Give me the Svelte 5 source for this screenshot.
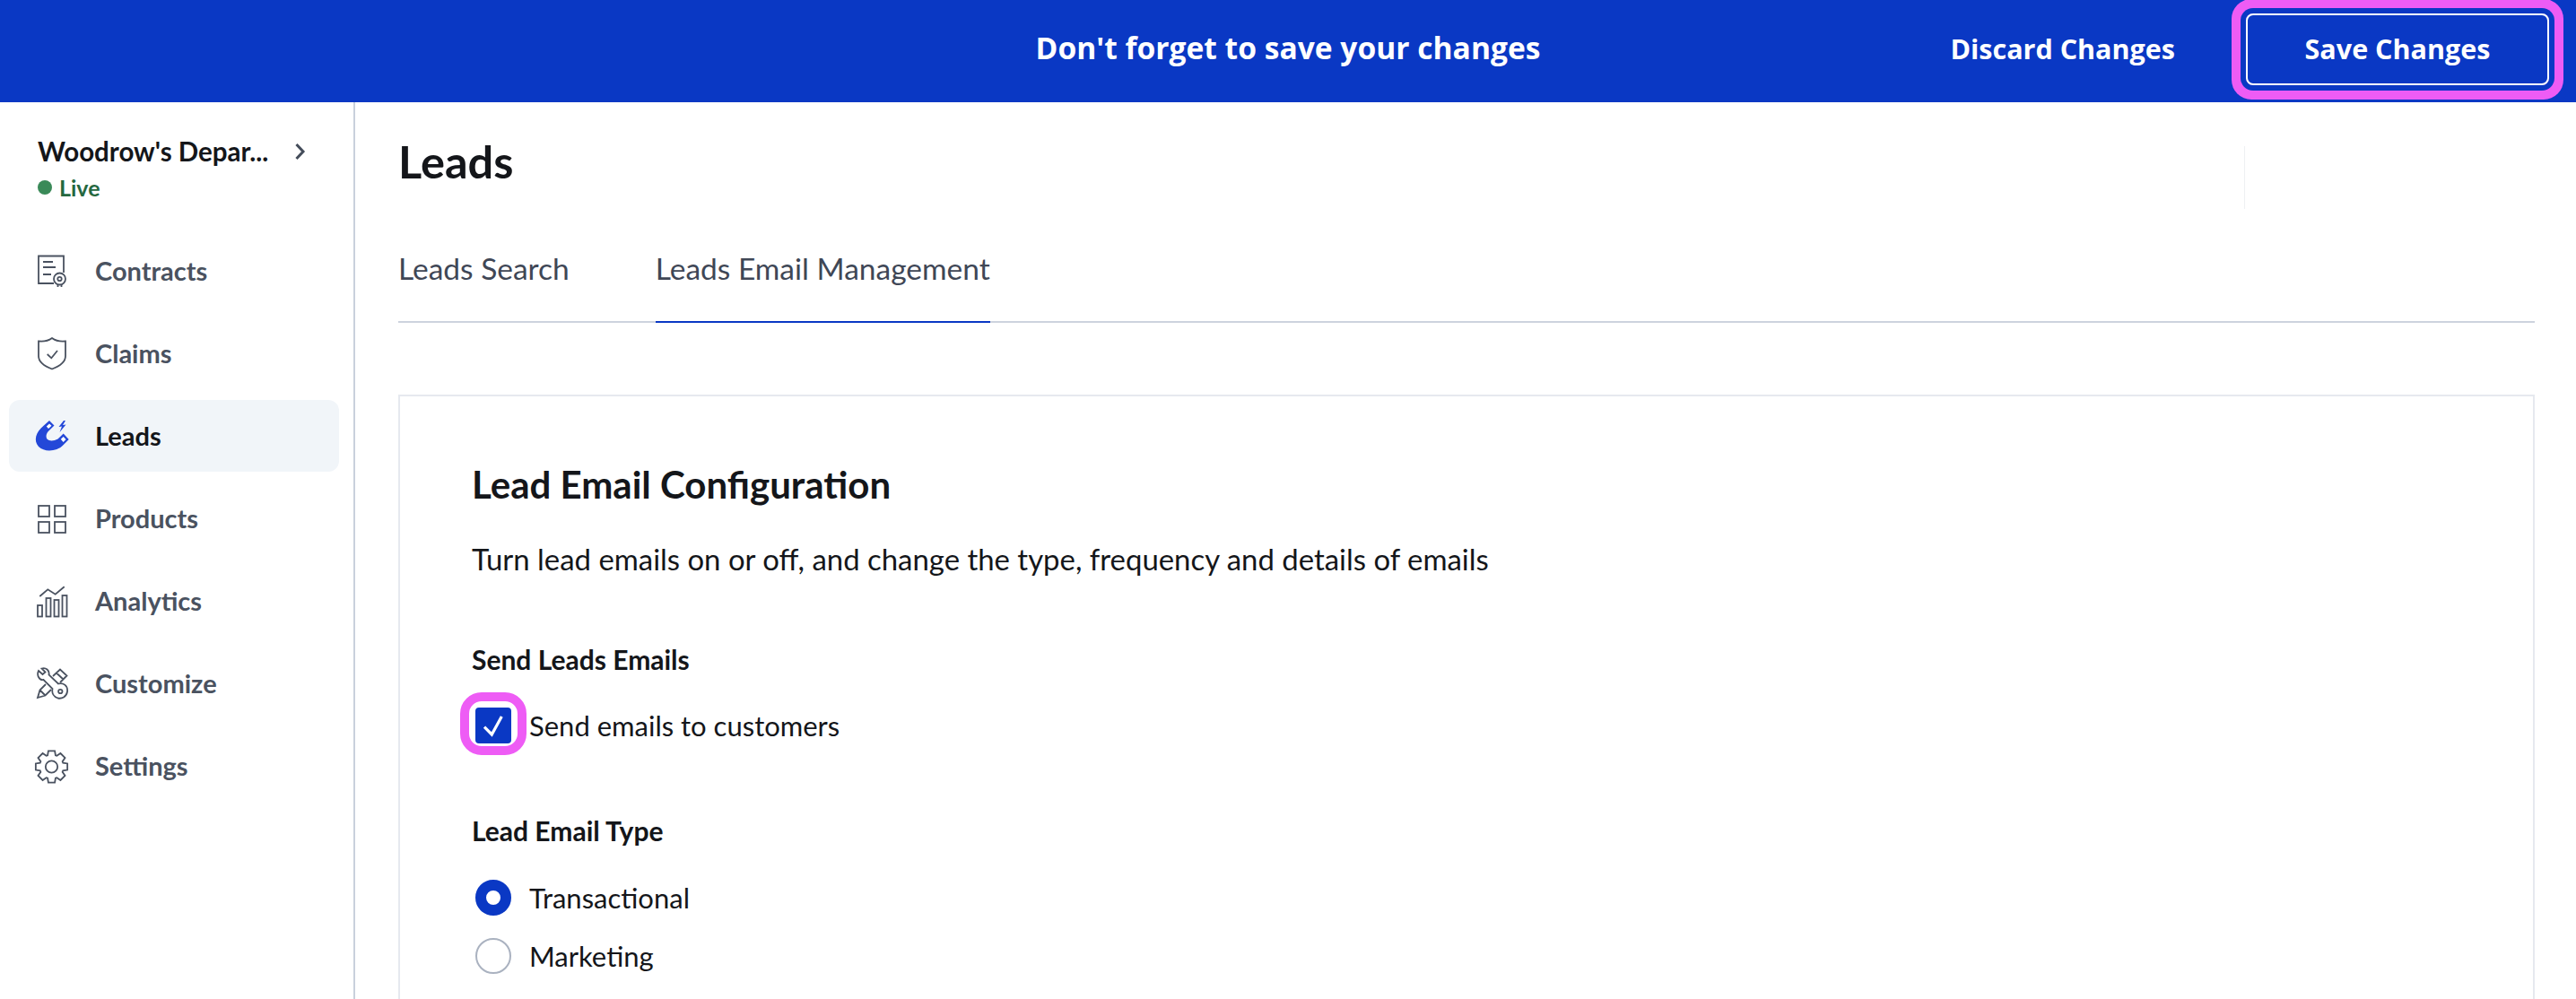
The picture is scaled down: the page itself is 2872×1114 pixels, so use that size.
<script>
  const nav = ['Contracts','Claims','Leads','Products','Analytics','Customize','Settings'];
  function gear(cx, cy, ro, ri, n) {
    const pts = [];
    const step = (Math.PI * 2) / n;
    for (let i = 0; i < n; i++) {
      const a = -Math.PI / 2 + i * step;
      [[ri, -0.5], [ro, -0.3], [ro, 0.3], [ri, 0.5]].forEach(([r, f]) => {
        const t = a + f * step * 0.85;
        pts.push((cx + r * Math.cos(t)).toFixed(2) + ' ' + (cy + r * Math.sin(t)).toFixed(2));
      });
    }
    return 'M' + pts.join('L') + 'Z';
  }
  const gearPath = gear(17.5, 19, 18, 13.5, 8);
</script>

<div class="page">
  <header class="bar">
    <p class="bar-msg">Don't forget to save your changes</p>
    <div class="bar-actions">
      <button class="discard">Discard Changes</button>
      <button class="save">Save Changes</button>
    </div>
  </header>
  <div class="body">
    <aside class="side">
      <div class="org">
        <div class="org-row">
          <span class="org-name">Woodrow's Depar...</span>
          <svg class="chev" viewBox="0 0 14 20" width="14" height="20"><path d="M2.500 2 10 10l-7.500 8" fill="none" stroke="#444c5a" stroke-width="3"/></svg>
        </div>
        <div class="live"><i></i>Live</div>
      </div>
      <nav class="nav">
        {#each nav as n}
          <div class="item" class:active={n==='Leads'}>
            <svg viewBox="0 0 36 36" width="36" height="36" fill="none" stroke="#4a5260" stroke-width="1.800">
              {#if n==='Contracts'}
                <path d="M20 32H3V1.500h28V20"/><path d="M8 8h11M8 14h14M8 22h9"/><circle cx="26.500" cy="27" r="6.500"/><circle cx="26.500" cy="27" r="2.200"/><path d="M24.500 33v3M28.500 33v3"/>
              {:else if n==='Claims'}
                <path d="M3 4.500C8 5 14 4 18 1c4 3 10 4 15 3.500V21c0 7-7 11.500-15 14.500C10 32.500 3 28 3 21Z"/><path d="M12.700 19l4.600 4.300L24 15"/>
              {:else if n==='Leads'}
                <path d="M8.300 7 15 1l5.500 5.500-6.700 6.500C11 16 11 20 13 22c2 2 7 2 11.500-.5l6.200-6 6 6.500-6.700 6.700C24 35 10 37 3 30-3 23 0 14 8.300 7Z" fill="#2448d8" stroke="none"/><path d="M11.800 7.500 15 4.500l2.500 2.300-3.500 3.200ZM27.800 21.800l2.900-2.900 2.800 3-2.900 3Z" fill="#fff" stroke="none"/><path d="M31 1 25.500 8l3.500-.5L26.500 14l7-8.500-3.500.5L33 1Z" fill="#2448d8" stroke="none"/>
              {:else if n==='Products'}
                <rect x="3" y="4" width="12" height="12"/><rect x="21" y="4" width="12" height="12"/><rect x="3" y="22" width="12" height="12"/><rect x="21" y="22" width="12" height="12"/>
              {:else if n==='Analytics'}
                <rect x="2" y="23" width="5" height="12.500"/><rect x="11.500" y="15" width="5" height="20.500"/><rect x="20.500" y="17" width="5" height="18.500"/><rect x="29.500" y="12" width="5" height="23.500"/><path d="M4.300 13l9-7.700 8.400 5.400 10-8.400"/>
              {:else if n==='Customize'}
                <path d="M3 4l4.500 4 3-2.500-4-4c4.500-1.500 9 2 8 7L25 18.500c5-1.500 11 1.500 10 9-1 5.500-6 8-10.500 7-4.500-1.500-7-5.500-6-10.500l-10-10C4 15 .5 9 3 4Z"/><circle cx="27.300" cy="27" r="2.200"/><path d="M11 19l-6.500 6.500L2 34l8.500-2.500L17 25M4.500 25.500l6 6M19 10l8-7.500 7.500 7L27 17M23 6.500l7.500 7"/>
              {:else}
                <path d={gearPath}/><circle cx="17.500" cy="19" r="6.700"/>
              {/if}
            </svg>
            <span>{n}</span>
          </div>
        {/each}
      </nav>
    </aside>
    <main class="main">
      <div class="head">
        <h1>Leads</h1>
        <div class="head-rule"></div>
      </div>
      <div class="tabs">
        <div class="tab">Leads Search</div>
        <div class="tab on">Leads Email Management</div>
      </div>
      <section class="card">
        <h2>Lead Email Configuration</h2>
        <p class="lede">Turn lead emails on or off, and change the type, frequency and details of emails</p>
        <h3>Send Leads Emails</h3>
        <div class="check-row">
          <span class="check">
            <svg viewBox="0 0 40 40" width="40" height="40"><path d="M10 21.700l8.300 8.300L29.300 10" fill="none" stroke="#fff" stroke-width="3.200" /></svg>
          </span>
          <span>Send emails to customers</span>
        </div>
        <h3 class="type">Lead Email Type</h3>
        <div class="radio-row first"><span class="radio sel"></span><span>Transactional</span></div>
        <div class="radio-row"><span class="radio"></span><span>Marketing</span></div>
      </section>
    </main>
  </div>
</div>

<style>
  :global(body){margin:0;background:#fff;overflow:hidden}
  .page{width:2872px;height:1114px;overflow:hidden;font-family:Lato,"Noto Sans",sans-serif;color:#14161a}
  .bar{height:114px;background:#0a38c4;position:relative;display:flex;align-items:flex-start;justify-content:flex-end;color:#fff}
  .bar-msg{position:absolute;left:0;right:0;text-align:center;margin:0;font:700 33.600px "Open Sans",sans-serif;top:31px;line-height:44px;}
  .bar-actions{display:flex;align-items:center;gap:79px;padding:15px 30px 0 0;position:relative}
  button{font:700 30.500px "Open Sans",sans-serif;color:#fff;background:none;border:0;padding:0 0 3px}
  .save{width:338px;height:80px;border:2px solid #fff;border-radius:8px;box-sizing:border-box;box-shadow:0 0 0 6px #0a38c4,0 0 0 16px #ee5cf5}
  .body{display:flex;height:1000px}
  .side{width:394px;border-right:2px solid #c9d0dc;flex:none}
  .org{padding:35px 0 0 42px;height:106px}
  .org-row{display:flex;align-items:center;justify-content:space-between;width:300px;font-weight:700;font-size:29.500px;line-height:40px}
  .live{display:flex;align-items:center;gap:8px;color:#25683f;font-size:25px;font-weight:700;line-height:34px;margin-top:3px}
  .live i{width:16px;height:16px;border-radius:50%;background:#3a8a58}
  .nav{display:flex;flex-direction:column;gap:12px;padding:0 16px 0 10px;margin-top:7px}
  .item{height:80px;display:flex;align-items:center;gap:30px;padding-left:30px;border-radius:12px;font-size:29px;font-weight:700;color:#4a5260;line-height:36px}
  .item svg{overflow:visible;flex:none}
  .item.active{background:#f1f5f9;color:#14161a}
  .main{flex:1;padding:0 46px 0 48px;min-width:0}
  .head{height:102px;position:relative}
  h1{margin:0;font-size:50.500px;font-weight:700;line-height:60px;padding-top:36px}
  .head-rule{position:absolute;left:2058px;top:49px;height:70px;width:1px;background:#eef0f3}
  .tabs{display:flex;gap:96px;border-bottom:2px solid #cdd3de;height:144px;box-sizing:border-box}
  .tab{font-size:33.500px;color:#3f4756;height:144px;box-sizing:border-box;padding-top:61px;line-height:44px}
  .tab.on{border-bottom:2px solid #0a38c4}
  .card{margin-top:80px;border:2px solid #e6e9ef;border-bottom:0;height:700px;box-sizing:border-box;padding:70px 0 0 80px}
  h2{margin:0;font-size:42px;line-height:56px;font-weight:700}
  .lede{margin:34px 0 0;font-size:32.900px;line-height:44px;color:#14161a}
  h3{margin:69px 0 0;font-size:30px;line-height:40px;font-weight:700}
  .check-row,.radio-row{display:flex;align-items:center;gap:20px;font-size:31px;line-height:44px;padding-left:4px}
  .check-row{margin-top:24px;height:60px}
  .check{width:40px;height:40px;background:#0a38c4;border-radius:4px;display:block;position:relative}
  .check::after{content:"";position:absolute;left:-17px;top:-17px;width:74px;height:70px;box-sizing:border-box;border:10px solid #ee5cf5;border-radius:24px}
  .check svg{display:block}
  .type{margin-top:67px}
  .radio-row{height:65px}
  .first{margin-top:22px}
  .radio{width:40px;height:40px;border-radius:50%;box-sizing:border-box;border:2px solid #aab2c0;background:#fff}
  .radio.sel{border:12px solid #0a38c4}
</style>
